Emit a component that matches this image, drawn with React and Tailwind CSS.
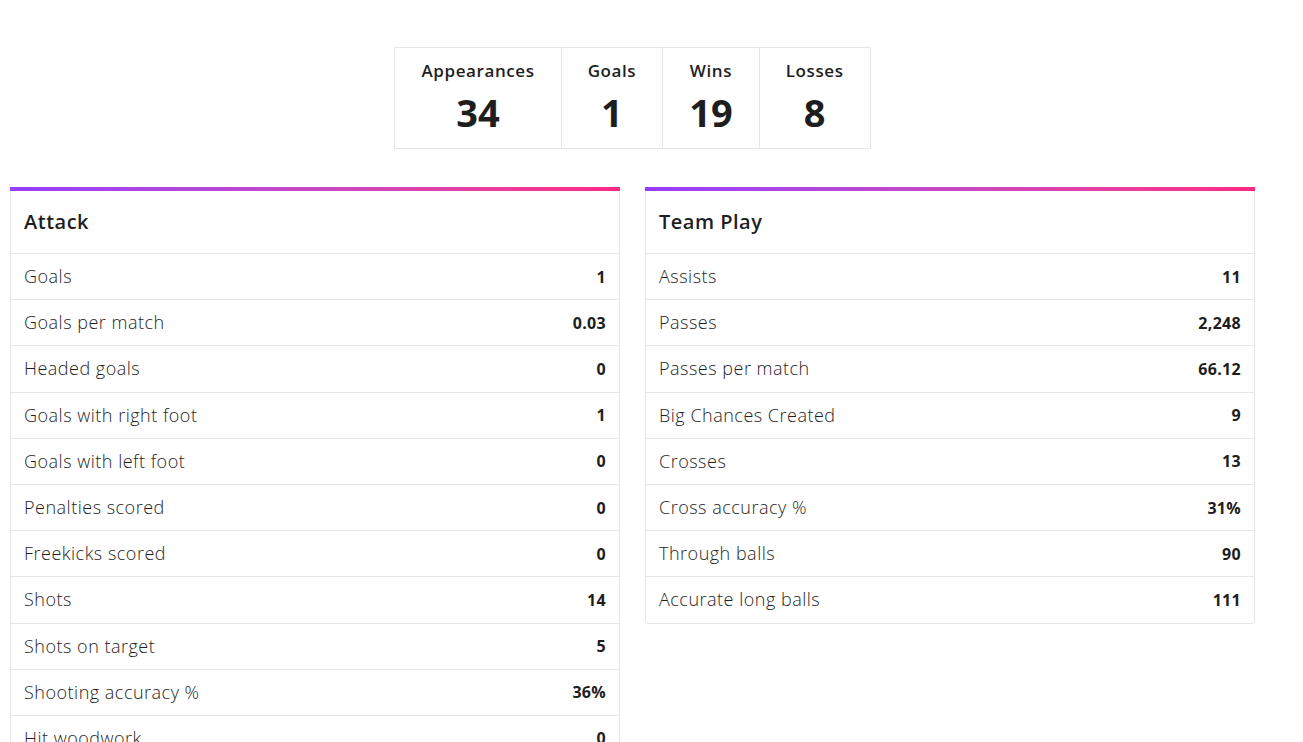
const top = [
  { label: 'Appearances', value: '34' },
  { label: 'Goals', value: '1' },
  { label: 'Wins', value: '19' },
  { label: 'Losses', value: '8' },
]

const attack = [
  ['Goals', '1'],
  ['Goals per match', '0.03'],
  ['Headed goals', '0'],
  ['Goals with right foot', '1'],
  ['Goals with left foot', '0'],
  ['Penalties scored', '0'],
  ['Freekicks scored', '0'],
  ['Shots', '14'],
  ['Shots on target', '5'],
  ['Shooting accuracy %', '36%'],
  ['Hit woodwork', '0'],
]

const teamPlay = [
  ['Assists', '11'],
  ['Passes', '2,248'],
  ['Passes per match', '66.12'],
  ['Big Chances Created', '9'],
  ['Crosses', '13'],
  ['Cross accuracy %', '31%'],
  ['Through balls', '90'],
  ['Accurate long balls', '111'],
]

function StatPanel({ title, rows }) {
  return (
    <div className="self-start">
      <div className="h-[4px] bg-gradient-to-r from-[#963cff] to-[#ff2882]" />
      <div className="border border-t-0 border-[#e6e6e6] rounded-b-[4px] bg-white">
        <h3 className="h-[62px] flex items-center px-[13px] text-[20px] font-semibold tracking-[0.5px] text-[#1e1e1e]">{title}</h3>
        {rows.map(([label, value]) => (
          <div key={label} className="h-[46.2px] flex items-center justify-between px-[13px] border-t border-[#e6e6e6]">
            <span className="text-[18px] font-light tracking-[0.5px] text-[#1e1e1e]">{label}</span>
            <span className="text-[16px] font-bold tracking-[0.3px] text-[#1e1e1e]">{value}</span>
          </div>
        ))}
      </div>
    </div>
  )
}

export default function App() {
  return (
    <div className="min-h-screen bg-white text-[#1e1e1e]" style={{ fontFamily: '"Open Sans", "Noto Sans", sans-serif' }}>
      <div className="w-[1245px] ml-[10px] pt-[47px]">
        <div className="flex justify-center">
          <div className="flex border border-[#e6e6e6] h-[102px]">
            {top.map((s, i) => (
              <div key={s.label} className={`flex flex-col items-center pt-[11px] px-[26px] ${i > 0 ? 'border-l border-[#e6e6e6]' : ''}`}>
                <span className="text-[17px] font-semibold tracking-[0.6px] leading-[24px]">{s.label}</span>
                <span className="text-[38px] font-bold leading-[48px] mt-[5px]">{s.value}</span>
              </div>
            ))}
          </div>
        </div>
        <div className="grid grid-cols-2 gap-[25px] mt-[38px]">
          <StatPanel title="Attack" rows={attack} />
          <StatPanel title="Team Play" rows={teamPlay} />
        </div>
      </div>
    </div>
  )
}
